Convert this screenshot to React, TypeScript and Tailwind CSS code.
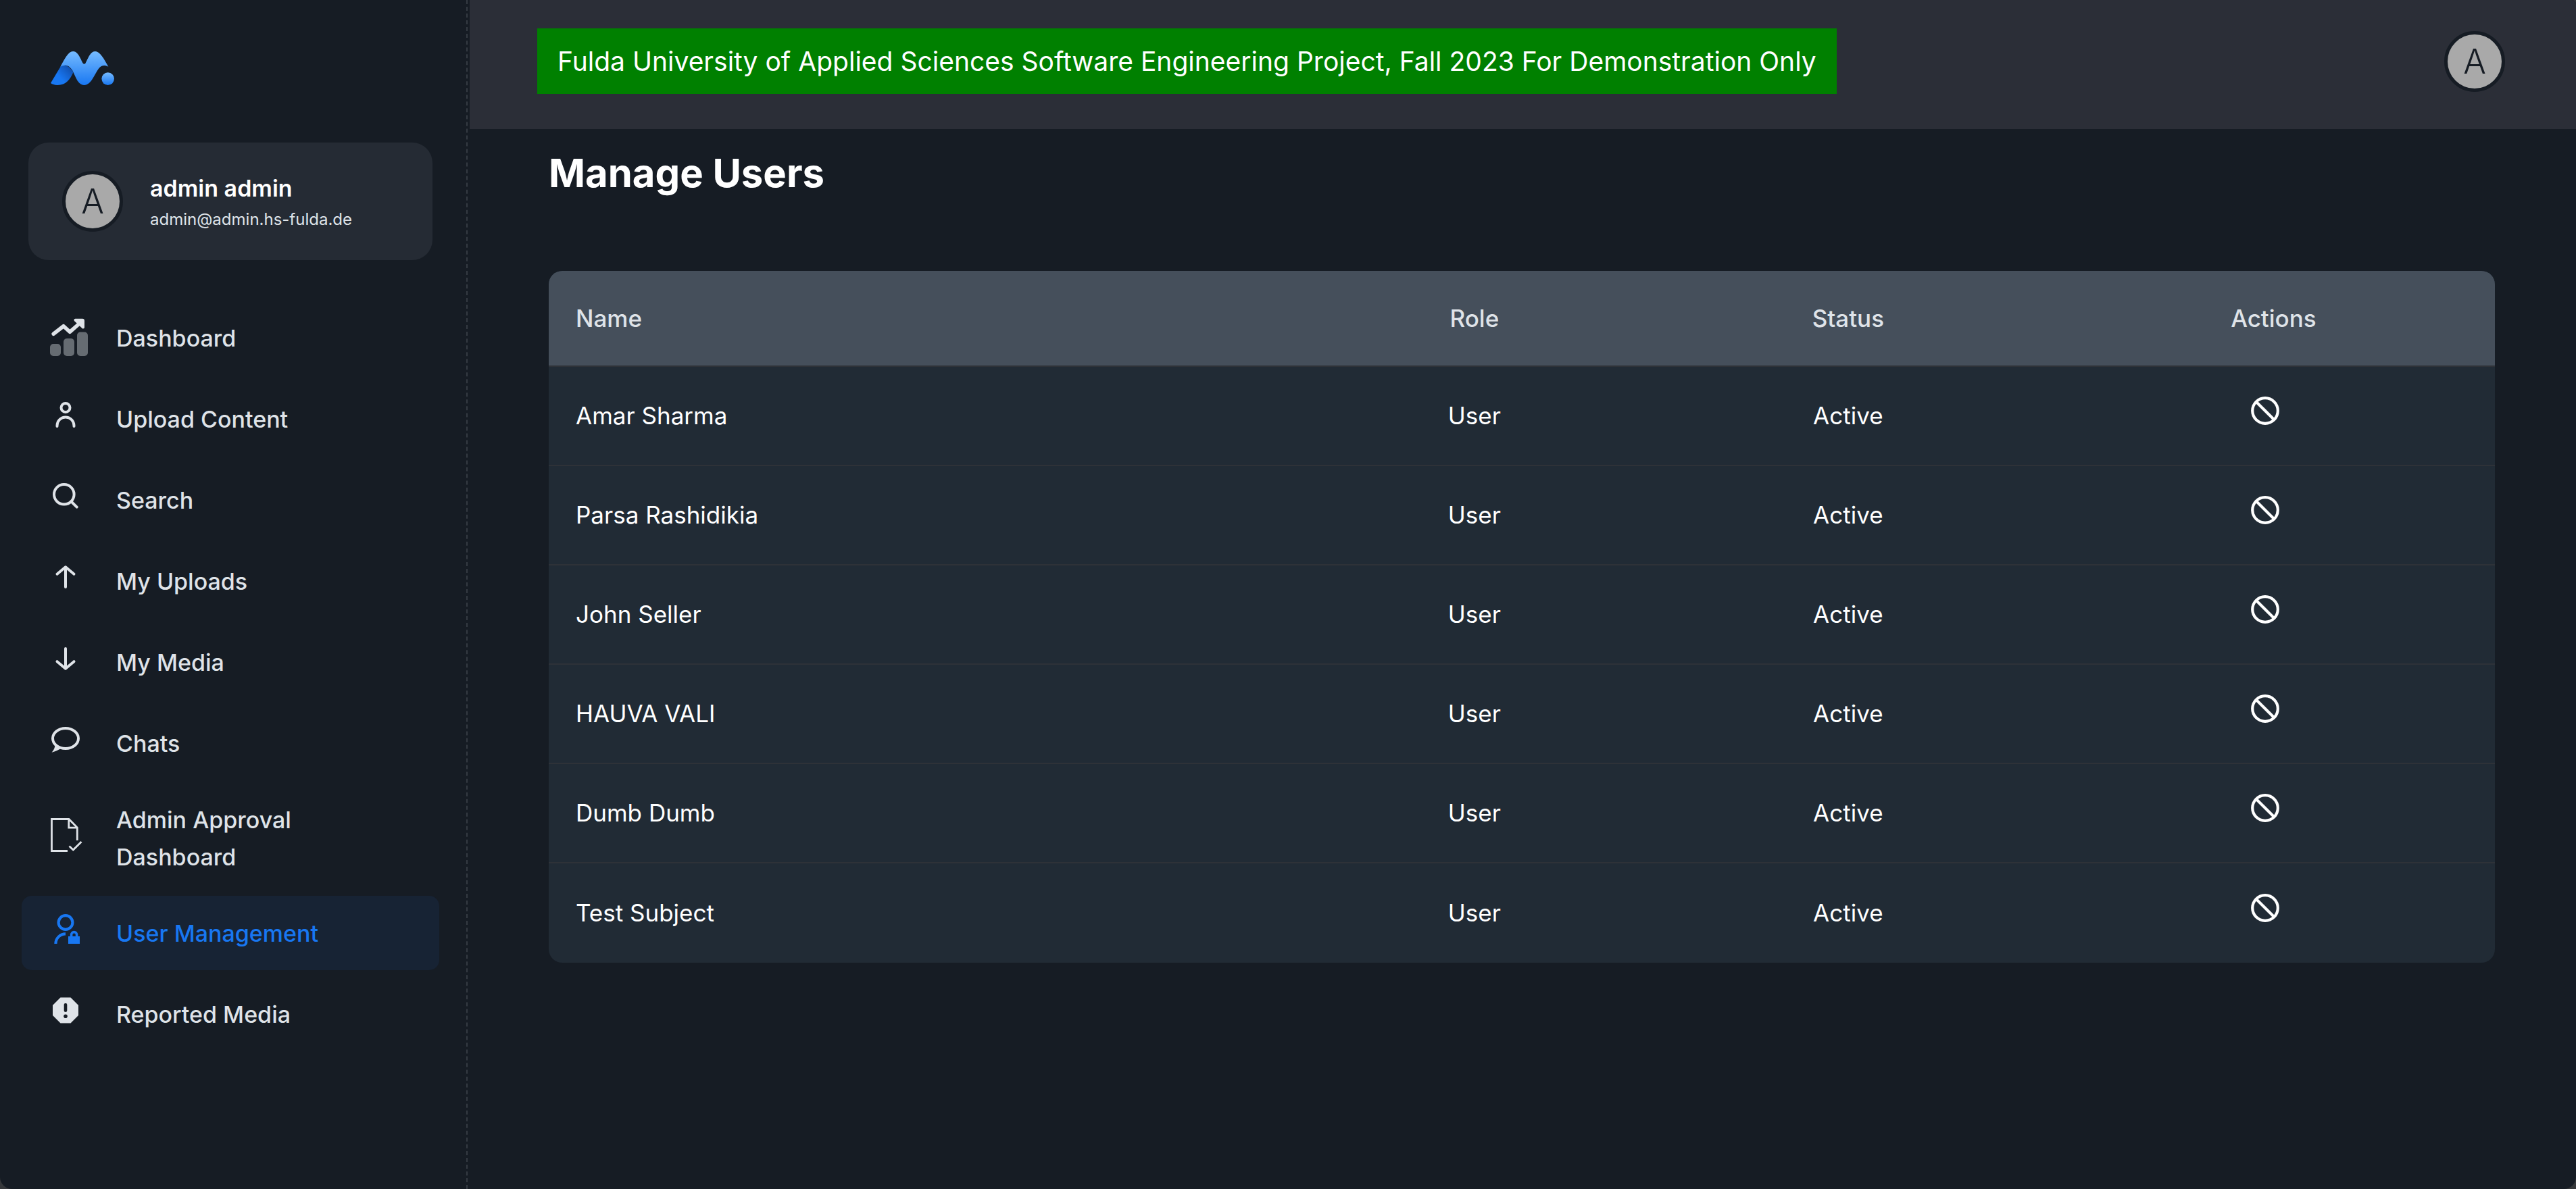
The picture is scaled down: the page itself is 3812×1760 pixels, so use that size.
import type { ReactNode } from "react";

function Logo() {
  return (
    <svg viewBox="105 108 283 150" className="h-[50px] w-[94px]" role="img" aria-label="Home">
      <defs>
        <linearGradient id="logo-light" x1="0" y1="0" x2="0" y2="1">
          <stop offset="0" stopColor="#76bbff" />
          <stop offset="1" stopColor="#1877f2" />
        </linearGradient>
        <linearGradient id="logo-dark" x1="1" y1="0.1" x2="0.4" y2="0.6">
          <stop offset="0" stopColor="#0f49a5" />
          <stop offset="1" stopColor="#1877f2" />
        </linearGradient>
      </defs>
      <path d="M105 249 150 174C166 165 186 170 206 200C192 232 174 258 135 258C122 258 112 254 105 249Z" fill="url(#logo-dark)" />
      <path
        d="M148 176C166 145 182 108 205 108C229 108 240 148 249 161Q254 168 260 161C270 145 280 108 303 108C325 108 343 143 362 176C344 167 331 170 320 183C300 208 287 258 254 258C225 258 215 217 202 193C187 168 168 165 148 176Z"
        fill="url(#logo-light)"
      />
      <circle cx="360" cy="230" r="28" fill="url(#logo-light)" />
    </svg>
  );
}

function Line({ children }: { children: ReactNode }) {
  return (
    <svg
      viewBox="0 0 50 50"
      className="mb-3 size-[50px] overflow-visible"
      fill="none"
      stroke="currentColor"
      strokeWidth="4"
      strokeLinecap="round"
      strokeLinejoin="round"
      aria-hidden="true"
    >
      {children}
    </svg>
  );
}

const icons: Record<string, ReactNode> = {
  dashboard: (
    <svg viewBox="0 0 60 60" className="size-[60px]" fill="currentColor" aria-hidden="true">
      <g opacity="0.4">
        <rect x="2" y="39" width="16" height="18" rx="5" />
        <rect x="22" y="31" width="16" height="26" rx="5" />
        <rect x="42" y="21.5" width="16" height="35.5" rx="5" />
      </g>
      <path d="M7.2 24.3 22 12.7 31.3 21.3 46 8.5" fill="none" stroke="currentColor" strokeWidth="5.6" strokeLinecap="round" strokeLinejoin="round" />
      <path d="M39.5 3.7 50 3.7Q51 3.7 51 4.7V14.5Z" stroke="currentColor" strokeWidth="4" strokeLinejoin="round" />
    </svg>
  ),
  person: (
    <Line>
      <circle cx="25" cy="14.5" r="6.5" />
      <path d="M12.5 42v-1a12.5 12.5 0 0 1 25 0v1" />
    </Line>
  ),
  search: (
    <Line>
      <circle cx="22.8" cy="22.8" r="14.8" />
      <path d="m33.5 33.5 8.2 8.2" />
    </Line>
  ),
  up: (
    <Line>
      <path d="M25 11v29M12.5 20.8 25 10.3l12.5 10.5" />
    </Line>
  ),
  down: (
    <Line>
      <path d="M25 11v29M12.5 30.2 25 40.7l12.5-10.5" />
    </Line>
  ),
  chat: (
    <Line>
      <ellipse cx="25" cy="24" rx="19" ry="15" />
      <path d="M9.5 33C9.5 38 7 42 4.5 44.7 10 43.5 15 41 19 38.5Z" fill="currentColor" stroke="none" />
    </Line>
  ),
  approval: (
    <svg viewBox="0 0 50 50" className="mb-3 size-[50px] overflow-visible" fill="none" stroke="currentColor" strokeWidth="2.8" aria-hidden="true">
      <path d="M28 49.5H4.5V2.5H30L42.3 15V34M29.8 2.5V15.2H42.3M30.5 42.5l5.8 5.6L48.5 36" />
    </svg>
  ),
  userLock: (
    <svg viewBox="0 0 50 50" className="mb-3 size-[50px] overflow-visible" fill="none" stroke="currentColor" strokeWidth="4.2" aria-hidden="true">
      <circle cx="25" cy="15.5" r="10.4" />
      <path d="M10.4 47A14.7 14.7 0 0 1 25 32.3" />
      <path d="M33.6 37v-3.4a4 4 0 0 1 8 0V37" strokeWidth="3.6" />
      <rect x="29" y="36" width="17" height="11" fill="currentColor" stroke="none" />
    </svg>
  ),
  report: (
    <svg viewBox="0 0 50 50" className="mb-3 size-[50px]" aria-hidden="true">
      <path d="M17.5 6.5h15L44 18v15L32.5 44.5h-15L6 33V18Z" fill="currentColor" />
      <rect x="22.7" y="15" width="4.6" height="13" rx="2.3" fill="#161c24" />
      <circle cx="25" cy="34.3" r="2.8" fill="#161c24" />
    </svg>
  ),
};

const nav = [
  { label: "Dashboard", icon: "dashboard" },
  { label: "Upload Content", icon: "person" },
  { label: "Search", icon: "search" },
  { label: "My Uploads", icon: "up" },
  { label: "My Media", icon: "down" },
  { label: "Chats", icon: "chat" },
  { label: "Admin Approval Dashboard", icon: "approval", tall: true },
  { label: "User Management", icon: "userLock", active: true },
  { label: "Reported Media", icon: "report" },
];

const users = ["Amar Sharma", "Parsa Rashidikia", "John Seller", "HAUVA VALI", "Dumb Dumb", "Test Subject"];

function Avatar() {
  return (
    <span className="flex size-[90px] shrink-0 items-center justify-center rounded-full border-[5px] border-[#161c24] bg-[#a9a9a9] text-[50px] leading-none font-light text-[#161c24]">
      A
    </span>
  );
}

function BlockIcon() {
  return (
    <svg viewBox="0 0 50 50" className="size-[50px]" fill="none" stroke="currentColor" strokeWidth="4.2" aria-hidden="true">
      <circle cx="25" cy="25" r="18.8" />
      <path d="m11.7 11.7 26.6 26.6" />
    </svg>
  );
}

function Sidebar() {
  return (
    <aside className="w-[692px] shrink-0 border-r-2 border-dashed border-[#343a42] pt-[76px]">
      <a href="#home" className="ml-[75px] block w-[94px]">
        <Logo />
      </a>
      <div className="mt-[85px] mr-[50px] ml-[42px] flex items-center gap-10 rounded-[30px] bg-[#252b34] px-[50px] py-[41px]">
        <Avatar />
        <div>
          <p className="text-[34px] leading-[53px] font-semibold text-white">admin admin</p>
          <p className="text-[24px] leading-[39px] text-[#dfe3e8]">admin@admin.hs-fulda.de</p>
        </div>
      </div>
      <nav className="mt-[60px] mr-10 ml-8 flex flex-col gap-2.5">
        {nav.map((item) => (
          <a
            key={item.label}
            href="#nav"
            aria-current={item.active ? "page" : undefined}
            className={`flex items-center gap-10 rounded-[15px] px-10 text-[34px] leading-[55px] font-medium ${
              item.active ? "bg-[#172334] text-[#1877f2]" : "text-[#dfe3e8]"
            } ${item.tall ? "h-[151px]" : "h-[110px]"}`}
          >
            <span className="flex w-[60px] shrink-0">{icons[item.icon]}</span>
            <span className="max-w-[320px]">{item.label}</span>
          </a>
        ))}
      </nav>
    </aside>
  );
}

function UsersTable() {
  return (
    <div className="overflow-hidden rounded-[20px] bg-[#212b35]">
      <table className="w-full table-fixed border-separate border-spacing-0 text-[35px] leading-[55px] text-white">
        <colgroup>
          <col className="w-[38.85%]" />
          <col className="w-[17.43%]" />
          <col className="w-[20.97%]" />
          <col className="w-[22.75%]" />
        </colgroup>
        <thead className="bg-[#454f5b] text-[#dfe3e8]">
          <tr className="h-[142px] *:border-b-2 *:border-[#2e3238] *:font-medium">
            <th scope="col" className="pl-10 text-left">Name</th>
            <th scope="col">Role</th>
            <th scope="col">Status</th>
            <th scope="col">Actions</th>
          </tr>
        </thead>
        <tbody>
          {users.map((name) => (
            <tr key={name} className="h-[147px] *:border-b-2 *:border-[#2e3238] last:*:border-b-0">
              <td className="pl-10">{name}</td>
              <td className="text-center">User</td>
              <td className="text-center">Active</td>
              <td className="text-center">
                <button type="button" aria-label={`Block ${name}`} className="mr-6 mb-4 inline-flex align-middle">
                  <BlockIcon />
                </button>
              </td>
            </tr>
          ))}
        </tbody>
      </table>
    </div>
  );
}

export default function App() {
  return (
    <div className="bg-[#36383b] font-['Inter',sans-serif]">
      <div className="flex min-h-screen overflow-hidden rounded-tr-[6px] rounded-b-[18px] bg-[#161c24]">
        <Sidebar />
        <div className="min-w-0 flex-1">
          <header className="ml-[3px] flex items-center justify-between bg-[#2b2e37] pt-[42px] pr-[105px] pb-[52px] pl-[100px]">
            <p className="bg-[#008000] px-[30px] py-[21px] text-[39px] leading-[55px] text-white">
              Fulda University of Applied Sciences Software Engineering Project, Fall 2023 For Demonstration Only
            </p>
            <button type="button" aria-label="Account" className="rounded-full">
              <Avatar />
            </button>
          </header>
          <main className="pt-[25px] pr-[120px] pb-20 pl-[120px]">
            <h1 className="mb-[105px] text-[58px] leading-[80px] font-bold text-white">Manage Users</h1>
            <UsersTable />
          </main>
        </div>
      </div>
    </div>
  );
}
